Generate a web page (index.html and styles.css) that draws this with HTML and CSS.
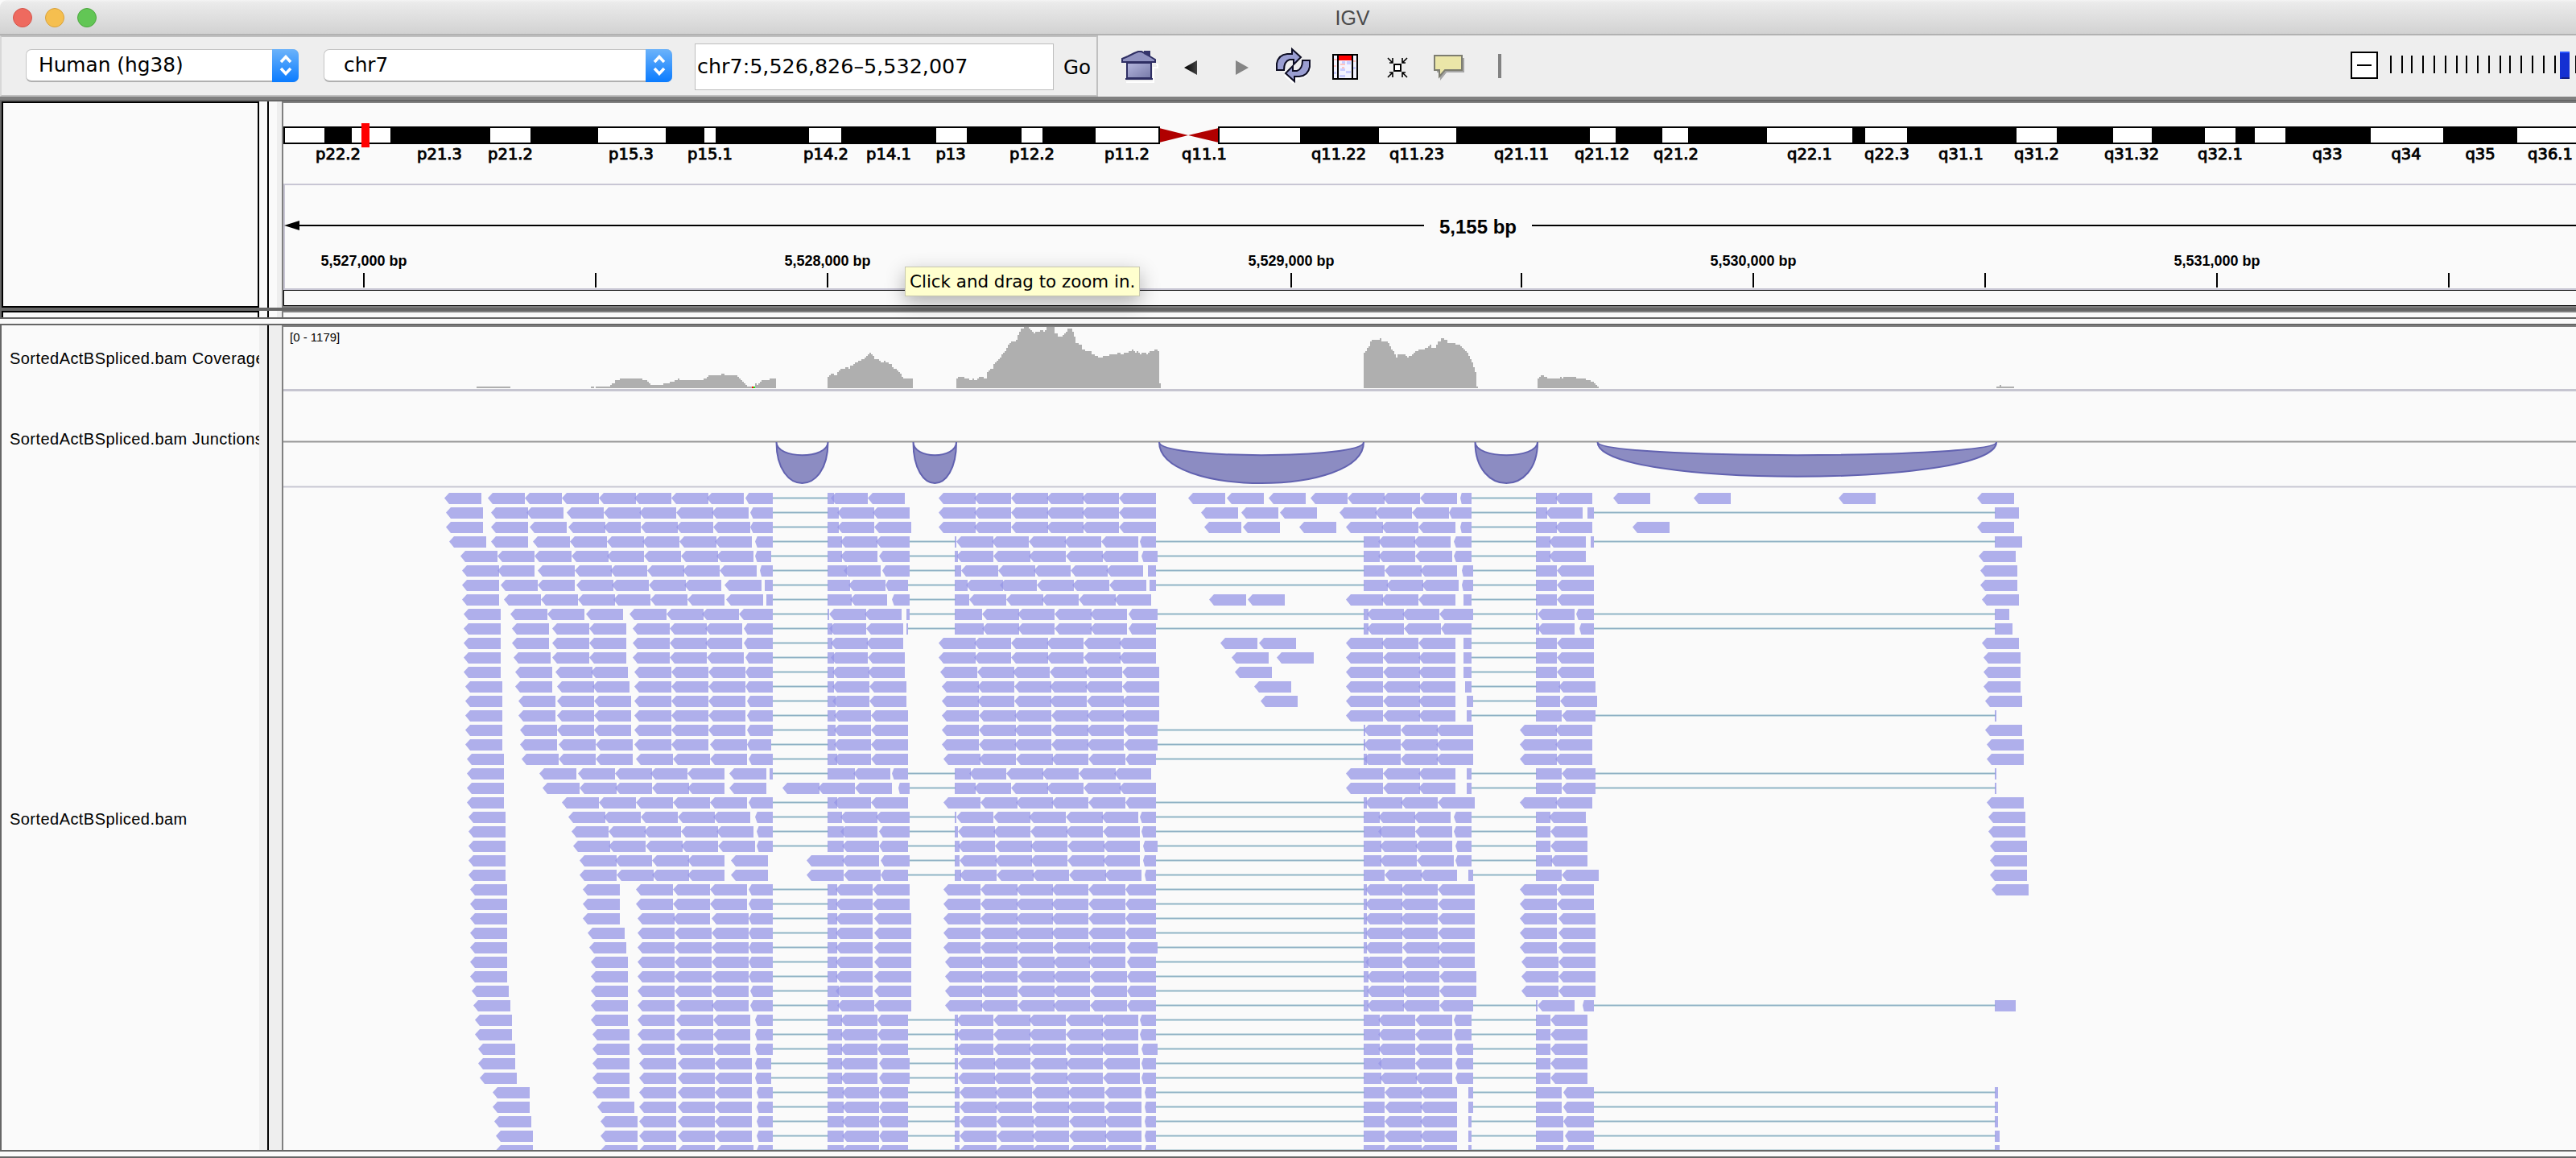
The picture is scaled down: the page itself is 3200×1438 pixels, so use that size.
FILE: index.html
```html
<!DOCTYPE html>
<html lang="en">
<head>
<meta charset="utf-8">
<title>IGV</title>
<link rel="stylesheet" href="styles.css">
</head>
<body>
<header class="titlebar">
  <div class="lights"><i class="light close"></i><i class="light min"></i><i class="light max"></i></div>
  <h1 class="title">IGV</h1>
</header>

<nav class="toolbar">
  <div class="locus">
    <div class="select genome"><span>Human (hg38)</span><b><svg width="20" height="26" viewBox="0 0 20 26"><path d="M4 9 10 2.500 16 9M4 17 10 23.500 16 17"/></svg></b></div>
    <div class="select chrom"><span>chr7</span><b><svg width="20" height="26" viewBox="0 0 20 26"><path d="M4 9 10 2.500 16 9M4 17 10 23.500 16 17"/></svg></b></div>
    <div class="field">chr7:5,526,826–5,532,007</div>
    <div class="go">Go</div>
  </div>
  <div class="icons">
    <svg class="ic" width="44" height="40" viewBox="0 0 44 40">
      <defs><linearGradient id="roof" x1="0" x2="1" y1="0" y2="1"><stop offset="0" stop-color="#b4b6de"/><stop offset="1" stop-color="#777aa8"/></linearGradient></defs>
      <path d="M43 18h2v4h-5v18H6" fill="none" stroke="#fff" stroke-width="2"/>
      <path d="M7 16v19h30V16z" fill="url(#roof)" stroke="#2e2e63" stroke-width="2"/>
      <path d="M5 36h34" stroke="#2e2e63" stroke-width="2"/>
      <path d="M1 15v-4L8 8 16 4 21 2h4l4 2 8 5 5 3v3z" fill="#9092c0" stroke="#2e2e63" stroke-width="2"/>
      <path d="M28 1h8v8l-8-4z" fill="#35356b"/>
    </svg>
    <svg class="ic" width="18" height="18" viewBox="0 0 18 18"><defs><linearGradient id="bk"><stop offset="0" stop-color="#000"/><stop offset="1" stop-color="#444"/></linearGradient></defs><path d="M0 9 16 0v18z" fill="url(#bk)"/></svg>
    <svg class="ic" width="18" height="18" viewBox="0 0 18 18"><path d="M16 9 0 0v18z" fill="#858585"/></svg>
    <svg class="ic" width="44" height="44" viewBox="0 0 44 44">
      <path d="M22 43 11 33M10 29h4M42 16v10l-6 8-12 5" fill="none" stroke="#fff" stroke-width="3"/>
      <path d="M1 27V19Q3 8 14 7H20V1L31 11 22 20V14H17Q10 16 10 27Z" fill="#9a9ed2" stroke="#0c0c22" stroke-width="2"/>
      <path d="M42 15V23Q40 34 29 35H23V41L12 31 21 22V28H26Q33 26 33 15Z" fill="#9a9ed2" stroke="#0c0c22" stroke-width="2"/>
    </svg>
    <svg class="ic" width="32" height="32" viewBox="0 0 32 32">
      <rect x="1" y="1" width="30" height="30" fill="#f3f3ff" stroke="#000" stroke-width="2"/>
      <path d="M2 6h4v2H2zM10 12h6v2h-6zM12 16h3v2h-3zM26 8h3v2h-3zM2 14h3v2H2z" fill="#ffc4c0"/>
      <path d="M10 18h6v3h-6zM18 9h5v4h-5zM17 21h6v3h-6zM9 26h7v3H9zM26 16h3v3h-3zM2 22h3v3H2zM12 9h4v3h-4z" fill="#c9ccff"/>
      <rect x="8" y="2" width="16" height="6" fill="#f00"/>
      <path d="M7 1v30M25 1v30" stroke="#000" stroke-width="2"/>
    </svg>
    <svg class="ic" width="26" height="26" viewBox="0 0 26 26">
      <rect x="9" y="9" width="8" height="8" fill="#fff" stroke="#000" stroke-width="2"/>
      <path d="M1 1 7 7M25 1 19 7M1 25 7 19M25 25 19 19M3 7H7V1M23 7H19V1M3 19H7V25M23 19H19V25" fill="none" stroke="#000" stroke-width="1.600"/>
    </svg>
    <svg class="ic" width="40" height="34" viewBox="0 0 40 34">
      <path d="M4 4H38V22H16L8 32V22H4Z" fill="#a5a5a5"/>
      <path d="M1 1H35V19H14L7 27V19H1Z" fill="#ebe6a8" stroke="#7d7d70" stroke-width="2"/>
    </svg>
    <i class="bar"></i>
  </div>
  <div class="zoomer">
    <div class="minus"><i></i></div>
    <svg width="246" height="34" viewBox="2954 64 246 34"><g id="zoomTicks"></g><rect x="3180" y="64" width="12" height="34" fill="#1430d2"/><rect x="3180" y="64" width="12" height="2" fill="#2a55ff"/><rect x="3182" y="96" width="10" height="2" fill="#142080"/></svg>
  </div>
</nav>

<div class="divider top"></div>

<section class="row header">
  <div class="namebox"></div>
  <div class="split plain"></div>
  <div class="panel">
    <svg width="2848" height="252" viewBox="352 128 2848 252">
      <g id="ideogram"></g>
      <path d="M1440 159 1476 168 1440 177ZM1514 159 1476 168 1514 177Z" fill="#b00000"/>
      <path d="M1440 157V179M1514 157V179" stroke="#000" stroke-width="2"/>
      <rect x="449" y="153" width="10" height="30" fill="#f00"/>
      <g id="bandLabels" class="band"></g>
      <g shape-rendering="crispEdges">
        <rect x="352" y="228" width="2848" height="2" fill="#c8c6d4"/>
        <rect x="352" y="228" width="2" height="132" fill="#c8c6d4"/>
        <rect x="352" y="358" width="2848" height="2" fill="#c8c6d4"/>
        <rect x="366" y="279" width="1403" height="2"/>
        <rect x="1903" y="279" width="1297" height="2"/>
        <rect x="352" y="360" width="2848" height="1"/>
        <rect x="352" y="379" width="2848" height="1"/>
        <rect x="352" y="360" width="1" height="20"/>
      </g>
      <path d="M353 280 372 274V286Z"/>
      <text class="span" x="1836" y="290">5,155 bp</text>
      <g id="ruler" class="ruler"></g>
    </svg>
    <div class="tooltip">Click and drag to zoom in.</div>
  </div>
</section>
<div class="divider mid"></div>
<section class="row sliver">
  <div class="namebox"></div>
  <div class="split plain"></div>
  <div class="panel"></div>
</section>
<div class="divider gap"></div>

<main class="row tracks">
  <div class="names">
    <div class="name cov"><span>SortedActBSpliced.bam Coverage</span></div>
    <div class="name junc"><span>SortedActBSpliced.bam Junctions</span></div>
    <div class="name reads"><span>SortedActBSpliced.bam</span></div>
  </div>
  <div class="split"></div>
  <div class="panel">
    <svg width="2848" height="80" viewBox="352 406 2848 80">
      <path id="coverage" fill="#afafaf"/>
      <path d="M934 480h2v2h-2z" fill="#f00"/><path d="M936 480h2v2h-2z" fill="#0f0"/>
      <text class="scale" x="360" y="424">[0 - 1179]</text>
      <path d="M352 484.500H3200" stroke="#c6c5d0" stroke-width="3"/>
    </svg>
    <svg width="2848" height="120" viewBox="352 486 2848 120">
      <path d="M352 548.500H3200" stroke="#c8c8c8" stroke-width="3"/><path d="M352 548.500H3200" stroke="#969696"/>
      <g id="junctions" fill="#8c8cc2" stroke="#6262b0" stroke-width="2"></g>
      <path d="M352 604.500H3200" stroke="#e2e2e8" stroke-width="3"/><path d="M352 604.500H3200" stroke="#c6c5d0"/>
    </svg>
    <svg width="2848" height="822" viewBox="352 606 2848 822">
      <g id="skips"></g>
      <g id="reads" class="read"></g>
    </svg>
  </div>
</main>
<div class="divider foot"></div>
<script src="tracks.js"></script>
</body>
</html>
```
FILE: styles.css
```css
* { box-sizing: border-box; }
body { margin: 0; width: 3200px; height: 1438px; overflow: hidden; background: #fafafa; font-family: "DejaVu Sans", sans-serif; color: #000; }
svg { display: block; flex: none; }

.titlebar { position: relative; height: 44px; display: flex; align-items: center; justify-content: center; background: linear-gradient(#f4f4f4 0, #ebebeb 3px, #d2d2d2 42px, #b2b2b2 42px, #b2b2b2 44px); border-top-left-radius: 9px; }
.lights { position: absolute; left: 16px; top: 10px; display: flex; gap: 16px; }
.light { width: 24px; height: 24px; border-radius: 50%; border: 1px solid; }
.close { background: #ee6a5f; border-color: #d5554b; }
.min { background: #f5bf4f; border-color: #d9a23c; }
.max { background: #62c655; border-color: #4da73f; }
.title { margin: 0 0 0 160px; font: 400 25px "Liberation Sans", sans-serif; color: #4a4a4a; padding-top: 1px; }

.toolbar { height: 76px; display: flex; align-items: center; background: #eee; font-size: 25px; }
.locus { width: 1364px; height: 76px; display: flex; align-items: center; border: 2px solid #c0c0c0; border-left-color: #d8d8d8; padding: 0 0 2px 30px; }
.select { height: 41px; display: flex; align-items: stretch; background: #fff; border-radius: 7px; border: 1px solid #c4c4c4; border-bottom: 2px solid #b0b0b0; padding-left: 15px; white-space: nowrap; }
.select span { flex: 1; line-height: 37px; }
.select b { width: 33px; margin: -1px -1px -2px 0; border-radius: 0 7px 7px 0; background: linear-gradient(#6cb3fa, #0a7bff); display: flex; align-items: center; justify-content: center; }
.select path { fill: none; stroke: #fff; stroke-width: 3.500; }
.genome { width: 339px; font-size: 24.800px; }
.chrom { width: 433px; margin-left: 31px; padding-left: 24px; font-size: 24.800px; }
.field { width: 446px; height: 58px; margin-left: 28px; padding: 3px 0 0 2px; background: #fff; border: 1px solid #bdbdbd; line-height: 49px; font-size: 25.400px; white-space: nowrap; margin-top: 4px; }
.go { margin-left: 12px; padding-top: 4px; font-size: 24.500px; }
.icons { display: flex; align-items: center; margin-left: 29px; }
.ic { overflow: visible; }
.ic:nth-child(2) { margin: 3px 0 0 34px; }
.ic:nth-child(3) { margin: 3px 0 0 46px; }
.ic:nth-child(4) { margin: 0 0 0 32px; }
.ic:nth-child(5) { margin: 1px 0 0 26px; }
.ic:nth-child(6) { margin: 3px 0 0 36px; }
.ic:nth-child(7) { margin: 6px 0 0 32px; }
.bar { width: 4px; height: 30px; background: #828282; margin: 0 0 0 40px; }
.zoomer { display: flex; margin: 0 0 2px auto; }
.minus { width: 34px; height: 34px; border: 2px solid #000; background: #fff; display: flex; align-items: center; justify-content: center; }
.minus i { width: 18px; height: 2px; background: #000; }

.divider.top { height: 6px; border-top: 4px solid #808080; background: #666; }
.divider.mid { height: 4px; background: #666; }
.divider.gap { height: 10px; border: solid #666; border-width: 2px 0; }
.divider.foot { height: 10px; border: solid #666; border-width: 2px 0; }
.row { display: flex; padding-left: 2px; background: linear-gradient(#666, #666) 0 0 / 2px 100% no-repeat; }
.header { height: 256px; }
.namebox { flex: none; width: 320px; border: 2px solid #000; }
.split { flex: none; width: 28px; background: linear-gradient(90deg, #eee 10px, #000 10px, #000 12px, #eee 12px); }
.split.plain { background: linear-gradient(90deg, #fafafa 10px, #000 10px, #000 12px, #fafafa 12px, #fafafa 22px, #eee 22px); }
.panel { position: relative; flex: 1; border-left: 2px solid #808080; border-top: 2px solid #808080; }
.header .panel { border-bottom: 2px solid #808080; }
.sliver { height: 8px; }
.sliver .namebox { border-bottom: 0; }
.tooltip { position: absolute; left: 772px; top: 203px; width: 292px; height: 37px; background: #ffffce; border: 1px solid #c8c8b0; box-shadow: 0 8px 24px rgba(0,0,0,.3); font-size: 21.400px; line-height: 36px; padding-left: 5px; white-space: nowrap; }

.tracks { height: 1024px; }
.names { flex: none; width: 320px; }
.name { display: flex; align-items: center; overflow: hidden; padding-left: 10px; font: 20px "Liberation Sans", sans-serif; letter-spacing: .450px; white-space: nowrap; }
.cov { height: 82px; }
.junc { height: 118px; }
.reads { height: 826px; }

.band { font-size: 19.500px; text-anchor: middle; stroke: #000; stroke-width: .900px; }
.ruler { font: bold 18px "Liberation Sans", sans-serif; text-anchor: middle; }
.span { font: bold 24px "Liberation Sans", sans-serif; text-anchor: middle; }
.scale { font: 15px "Liberation Sans", sans-serif; }
.read { fill: #9696e6; fill-opacity: .75; }
```
FILE: tracks.js
```js
const put = (id, html) => { document.getElementById(id).innerHTML = html; };
const box = (x, y, w, h, fill) => `<rect x="${x}" y="${y}" width="${w}" height="${h}"${fill ? ` fill="${fill}"` : ''}/>`;

// Zoom slider
put('zoomTicks', [2969, 2983, 2995, 3009, 3023, 3037, 3051, 3063, 3077, 3091, 3105, 3117, 3131, 3145, 3159, 3173, 3199].map(x => box(x, 69, 2, 22)).join(''));

// Ideogram: white bands on a black bar
const white = [[354,403],[437,485],[609,659],[743,827],[875,889],[1005,1045],[1163,1201],[1269,1295],[1361,1440],[1514,1615],[1713,1809],[1975,2007],[2065,2097],[2195,2301],[2317,2369],[2505,2555],[2625,2673],[2739,2777],[2801,2839],[2945,3035],[3127,3200]];
put('ideogram', box(352, 157, 1088, 22) + box(1514, 157, 1686, 22) + white.map(([a, b]) => box(a, 159, b - a, 18, '#fff')).join(''));
const bands = { 'p22.2': 420, 'p21.3': 546, 'p21.2': 634, 'p15.3': 784, 'p15.1': 882, 'p14.2': 1026, 'p14.1': 1104, 'p13': 1181, 'p12.2': 1282, 'p11.2': 1400, 'q11.1': 1496, 'q11.22': 1663, 'q11.23': 1760, 'q21.11': 1890, 'q21.12': 1990, 'q21.2': 2082, 'q22.1': 2248, 'q22.3': 2344, 'q31.1': 2436, 'q31.2': 2530, 'q31.32': 2648, 'q32.1': 2758, 'q33': 2891, 'q34': 2989, 'q35': 3081, 'q36.1': 3168 };
put('bandLabels', Object.entries(bands).map(([t, x]) => `<text x="${x}" y="198">${t}</text>`).join(''));

// Ruler
const ticks = [452, 740, 1028, 1316, 1604, 1890, 2178, 2466, 2754, 3042];
put('ruler', ticks.map((x, i) => box(x - 1, 339, 2, 18) + (i % 2 ? '' : `<text x="${x}" y="330">5,${527 + i / 2},000 bp</text>`)).join(''));

// Coverage: blocks of "x height" steps, closed by the right edge
const coverage = [
  '592 2 634', '734 2 738',
  '740 2 758 4 760 6 764 10 770 12 798 10 804 8 806 6 808 4 824 6 832 8 838 10 842 12 844 10 874 12 878 14 880 16 896 18 900 16 916 14 918 12 920 10 922 8 924 6 926 4 928 2 938 6 940 4 942 6 944 8 946 10 956 12 964',
  '1028 14 1030 16 1032 18 1036 16 1040 20 1042 22 1044 24 1050 26 1054 24 1056 28 1060 30 1062 32 1066 34 1070 36 1074 38 1076 40 1078 42 1080 44 1082 42 1084 40 1086 36 1092 34 1094 32 1098 34 1100 32 1104 30 1108 26 1110 24 1114 22 1116 20 1118 18 1120 14 1122 12 1134',
  '1188 12 1190 14 1198 12 1204 10 1208 12 1210 10 1214 12 1216 14 1222 12 1226 20 1228 22 1230 24 1234 30 1236 32 1238 34 1240 36 1242 38 1244 42 1246 44 1248 46 1250 50 1252 54 1254 56 1256 58 1262 60 1264 66 1266 70 1268 74 1272 76 1278 74 1280 72 1282 70 1284 68 1286 70 1292 72 1296 70 1298 72 1300 76 1310 68 1314 64 1320 66 1322 68 1324 70 1326 74 1332 70 1334 64 1336 56 1340 54 1344 48 1348 46 1356 42 1360 40 1364 38 1370 40 1378 42 1388 44 1392 42 1396 44 1402 46 1406 48 1408 46 1410 44 1412 46 1414 44 1416 42 1418 44 1424 42 1426 44 1428 46 1434 48 1438 46 1440 6 1442',
  '1694 44 1696 46 1698 50 1700 52 1702 58 1704 60 1714 62 1716 58 1724 56 1726 52 1728 48 1730 46 1732 42 1734 38 1736 42 1746 40 1748 38 1750 40 1754 42 1756 44 1758 46 1762 48 1770 50 1774 52 1776 54 1778 50 1784 54 1786 58 1790 62 1794 60 1798 56 1808 54 1814 52 1816 50 1818 48 1820 46 1822 44 1824 40 1826 36 1828 32 1830 26 1832 20 1834 2 1836',
  '1910 12 1912 14 1914 16 1918 14 1922 12 1938 14 1940 12 1942 14 1958 12 1970 10 1976 8 1980 6 1982 4 1984 2 1986',
  '2480 2 2484 4 2486 2 2502'
];
document.getElementById('coverage').setAttribute('d', coverage.map(s => {
  const v = s.split(' ').map(Number);
  let d = `M${v[0]} 482`;
  for (let i = 1; i < v.length; i += 2) d += `V${482 - v[i]}H${v[i + 1]}`;
  return d + 'V482Z';
}).join(''));

// Junction arcs: [start, end, outer depth]
put('junctions', [[964.5,1028.5,68],[1134.5,1188,68],[1440,1694,68],[1832.5,1910,68],[1984.5,2480,57]].map(([a, b, d]) =>
  `<path d="M${a} 549C${a} ${549 + d} ${b} ${549 + d} ${b} 549C${b} 570.500 ${a} 570.500 ${a} 549Z"/>`).join(''));

// Alignments, one string per row. "598" is a whole read ending there, "926<960" a read cut
// at its right end, "1028-1036" a block without a tip, "~" a skipped region.
const rows = `
598 652 698 744 790 834 880 924 926<960 ~ 1028-1036 1078 1124 1212 1256 1302 1346 1390 1436 1522 1570 1622 1674 1720 1764 1810 1814<1828 ~ 1908-1934 1978 2050 2150 2330 2502
600 656 700 750 796 840 886 930 932<960 ~ 1028-1042 1086 1130 1212 1256 1302 1346 1390 1436 1538 1588 1636 1710 1754 1800 1800<1828 ~ 1908-1922 1966 1972-1980 ~ 2478-2508
600 656 704 752 796 842 886 932 932<960 ~ 1028-1042 1086 1132 1212 1256 1302 1346 1390 1436 1542 1590 1660 1718 1762 1808 1814<1828 ~ 1908-1934 1978 2074 2502
604 656 708 754 800 844 890 934 938<960 ~ 1028-1046 1090 1088<1130 ~ 1186-1188 1234 1278 1324 1368 1414 1416<1436 ~ 1694-1714 1758 1802 1806<1828 ~ 1908-1926 1970 1976-1980 ~ 2478-2512
618 664 710 756 800 846 892 936 938<958 ~ 1028-1046 1090 1092<1130 ~ 1186-1190 1234 1280 1324 1370 1414 1418<1438 ~ 1694-1714 1758 1804 1806<1828 ~ 1908-1926 1970 2504
620 664 714 760 804 850 894 940 944<960 ~ 1028-1052 1094 1096<1130 ~ 1186-1194 1240 1286 1330 1376 1420 1426-1436 ~ 1694-1720 1766 1810 1816<1830 ~ 1908-1934 1980 2506
620 668 714 762 806 852 896 946 950-960 ~ 1028-1056 1100 1100<1128 ~ 1186-1202 1246 1288 1334 1378 1424 1428-1436 ~ 1694-1724 1768 1812 1816<1830 ~ 1908-1934 1980 2506
620 672 718 764 808 854 900 948 952-960 ~ 1028-1058 1102 1108<1130 ~ 1186-1204 1250 1296 1340 1386 1430 1548 1596 1718 1762 1808 1818-1828 ~ 1908-1934 1980 2508
622 680 726 774 828 874 918 918<960 ~ 1028-1030 1076 1120 1126-1130 ~ 1186-1220 1266 1310 1356 1400 1402<1438 ~ 1694-1700 1744 1788 1788<1830 ~ 1908-1910 1956 1958<1980 ~ 2478-2496
622 682 732 778 832 878 922 924<960 ~ 1028-1034 1076 1122 1126-1128 ~ 1186-1222 1266 1310 1356 1400 1402<1436 ~ 1694-1700 1744 1790 1790<1828 ~ 1908-1912 1956 1962<1980 ~ 2478-2500
622 682 732 778 832 878 922 924<960 ~ 1028-1034 1078 1122 1212 1256 1302 1346 1392 1436 1562 1610 1718 1762 1808 1818-1828 ~ 1908-1934 1980 2508
622 684 732 778 832 878 924 926<960 ~ 1028-1036 1078 1124 1212 1256 1302 1346 1392 1436 1576 1632 1718 1764 1808 1818-1828 ~ 1908-1934 1980 2510
622 686 736 780 834 880 926 926<960 ~ 1028-1036 1080 1124 1214 1260 1304 1350 1394 1440 1580 1718 1764 1808 1818-1828 ~ 1908-1934 1980 2510
624 686 738 782 834 880 926 926<960 ~ 1028-1036 1080 1126 1216 1260 1306 1350 1394 1440 1604 1718 1764 1808 1820-1828 ~ 1908-1938 1982 2510
624 690 738 784 834 880 926 928<960 ~ 1028-1038 1080 1126 1216 1260 1306 1350 1396 1440 1612 1718 1764 1808 1822-1830 ~ 1908-1938 1984 2512
624 690 738 784 834 880 926 928<960 ~ 1028-1038 1082 1128 1216 1262 1306 1352 1396 1440 1718 1764 1808 1822-1828 ~ 1908-1940 1940<1982 ~ 2478-2480
624 692 738 784 834 880 926 928<960 ~ 1028-1038 1082 1128 1216 1262 1306 1352 1396 1396<1438 ~ 1694-1696 1740 1786 1830 1934 1978 2512
624 692 740 786 834 880 928 928<958 ~ 1028-1038 1082 1128 1216 1262 1306 1352 1396 1396<1438 ~ 1694-1696 1740 1786 1830 1934 1978 2514
626 694 740 786 836 882 928 930<960 ~ 1028-1040 1082 1128 1218 1262 1308 1352 1398 1398<1436 ~ 1694-1698 1740 1786 1830 1934 1978 2514
626 716 764 810 854 900 952 956-960 ~ 1028-1062 1106 1108<1128 ~ 1186-1206 1250 1296 1340 1386 1430 1718 1764 1808 1822-1828 ~ 1908-1940 1940<1982 ~ 2478-2480
626 720 766 810 856 900 952 1018 1062 1108 1116<1130 ~ 1186-1212 1256 1302 1346 1392 1436 1718 1764 1808 1822-1828 ~ 1908-1940 1940<1982 ~ 2478-2480
626 744 790 836 882 928 930<960 ~ 1028-1040 1082 1128 1218 1264 1308 1352 1398 1398<1436 ~ 1694-1698 1742 1786 1832 1934 1978 2514
628 752 796 842 888 932 938<960 ~ 1028-1046 1090 1088<1130 ~ 1186-1188 1234 1280 1324 1370 1414 1416<1436 ~ 1694-1714 1758 1802 1806<1828 ~ 1908-1926 1970 2516
628 756 802 846 892 936 940<960 ~ 1028-1048 1090 1092<1130 ~ 1186-1190 1236 1280 1326 1370 1416 1418<1436 ~ 1694-1716 1758 1804 1806<1828 ~ 1908-1926 1972 2516
628 758 802 848 892 938 940<960 ~ 1028-1048 1092 1092<1128 ~ 1186-1192 1236 1282 1326 1372 1416 1420<1438 ~ 1694-1716 1760 1804 1808<1828 ~ 1908-1926 1972 2518
628 766 810 856 900 954 1048 1092 1094<1130 ~ 1186-1192 1238 1282 1326 1372 1416 1420<1436 ~ 1694-1716 1760 1806 1808<1828 ~ 1908-1928 1972 2518
628 766 812 856 900 954 1048 1094 1094<1128 ~ 1186-1194 1238 1284 1328 1374 1418 1422<1436 ~ 1694-1720 1766 1810 1824-1830 ~ 1908-1940 1986 2518
630 770 836 882 928 930<960 ~ 1028-1040 1084 1130 1218 1264 1308 1352 1398 1398<1436 ~ 1694-1698 1742 1786 1832 1934 1980 2520
630 770 836 882 928 930<960 ~ 1028-1040 1084 1130 1218 1264 1308 1352 1398 1398<1436 ~ 1694-1698 1742 1786 1832 1934 1980
630 770 838 882 930 930<960 ~ 1028-1040 1084 1132 1218 1264 1308 1352 1398 1398<1436 ~ 1694-1698 1742 1786 1832 1934 1982
630 776 838 884 930 930<960 ~ 1028-1040 1084 1132 1218 1264 1308 1352 1398 1398<1436 ~ 1694-1698 1742 1786 1832 1934 1982
630 778 838 884 930 930<960 ~ 1028-1040 1084 1132 1218 1264 1308 1354 1398 1400<1438 ~ 1694-1698 1742 1788 1832 1934 1982
630 780 838 884 930 930<960 ~ 1028-1040 1084 1132 1220 1264 1310 1354 1398 1400<1436 ~ 1694-1700 1742 1788 1832 1936 1982
630 780 838 884 930 930<960 ~ 1028-1040 1084 1132 1220 1264 1310 1354 1400 1400<1436 ~ 1694-1700 1744 1788 1834 1936 1982
632 780 838 884 930 932<960 ~ 1028-1042 1084 1132 1220 1264 1310 1354 1400 1400<1436 ~ 1694-1700 1744 1788 1834 1936 1982
634 780 838 886 930 932<960 ~ 1028-1042 1086 1132 1220 1264 1310 1354 1400 1400<1436 ~ 1694-1700 1744 1788 1788<1830 ~ 1908-1910 1956 1966<1980 ~ 2478-2504
636 780 838 886 932 938<960 ~ 1028-1046 1090 1090<1128 ~ 1186-1190 1234 1280 1324 1370 1414 1416<1436 ~ 1694-1714 1758 1804 1806<1828 ~ 1908-1926 1972
636 782 838 886 932 938<960 ~ 1028-1046 1090 1090<1128 ~ 1186-1190 1234 1280 1324 1370 1414 1416<1436 ~ 1694-1714 1758 1804 1806<1828 ~ 1908-1926 1972
640 782 838 886 932 938<960 ~ 1028-1046 1090 1090<1128 ~ 1186-1190 1234 1280 1324 1370 1414 1418<1438 ~ 1694-1714 1758 1804 1808<1830 ~ 1908-1926 1972
640 782 840 888 934 938<958 ~ 1028-1046 1090 1092<1130 ~ 1186-1190 1236 1280 1326 1370 1416 1418<1436 ~ 1694-1716 1758 1804 1808<1830 ~ 1908-1926 1972
642 782 840 888 934 938<958 ~ 1028-1046 1090 1092<1130 ~ 1186-1190 1236 1280 1326 1370 1416 1418<1436 ~ 1694-1716 1760 1804 1808<1830 ~ 1908-1926 1972
658 782 840 888 934 940<960 ~ 1028-1048 1092 1092<1128 ~ 1186-1192 1238 1282 1328 1372 1418 1422<1436 ~ 1694-1720 1766 1810 1824-1830 ~ 1908-1940 1942<1980 ~ 2478-2482
658 788 840 888 934 940<960 ~ 1028-1048 1092 1092<1128 ~ 1186-1192 1238 1282 1328 1372 1418 1422<1436 ~ 1694-1720 1766 1810 1824-1830 ~ 1908-1940 1942<1980 ~ 2478-2482
660 792 840 888 934 940<960 ~ 1028-1048 1092 1092<1128 ~ 1186-1192 1238 1284 1328 1374 1418 1422<1436 ~ 1694-1720 1766 1810 1824-1828 ~ 1908-1942 1942<1980 ~ 2478-2482
662 792 840 888 934 940<960 ~ 1028-1048 1092 1092<1128 ~ 1186-1192 1238 1284 1328 1374 1418 1422<1436 ~ 1694-1720 1766 1810 1824-1828 ~ 1908-1942 1944<1980 ~ 2478-2484
662 792 840 888 936 940<960 ~ 1028-1048 1092 1092<1128 ~ 1186-1192 1238 1284 1328 1374 1418 1422<1436 ~ 1694-1720 1766 1810 1824-1828 ~ 1908-1942 1944<1980 ~ 2478-2484
`.trim().split('\n');

let reads = '', skips = '';
rows.forEach((row, i) => {
  const y = 612 + 18 * i;
  let end = 0, skip = false;
  row.split(' ').forEach(t => {
    if (t === '~') { skip = true; return; }
    const n = t.split(/[-<]/).map(Number);
    const a = n.length > 1 ? n[0] : n[0] - 46;
    const b = n.length > 1 ? n[1] : n[0];
    if (skip) {
      skips += box(end, y + 5, a + 1 - end, 3, '#c6dae1') + box(end, y + 6, a + 1 - end, 1, '#8fb1c4');
      skip = false;
    }
    if (t.includes('-')) reads += box(a, y, b - a, 14);
    else {
      const tip = b - a >= 40 ? 6 : Math.max(1.5, (b - a) / 8);
      reads += `<path d="M${a} ${y + 6.5}L${a + tip} ${y}H${b}V${y + 14}H${a + tip}Z"/>`;
    }
    end = b;
  });
});
put('skips', skips);
put('reads', reads);
```
